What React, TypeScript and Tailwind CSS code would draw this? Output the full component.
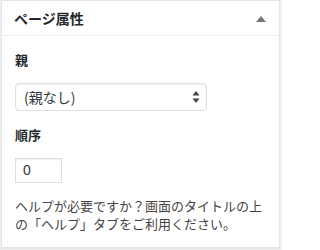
export default function App() {
  const font = { fontFamily: '"Noto Sans CJK JP", "Liberation Sans", sans-serif' };
  return (
    <div className="w-[282px] h-[250px] bg-[#f1f1f1] pl-px" style={font}>
      <div className="w-[279px] h-[248px] bg-white border border-[#e5e5e5] shadow-[0_1px_1px_rgba(0,0,0,0.04)]">
        {/* header */}
        <div className="h-[35px] flex items-center justify-between border-b border-[#eeeeee] pl-[12px] pr-[13px]">
          <h2 className="text-[14px] font-bold text-[#23282d] leading-none">ページ属性</h2>
          <svg width="10" height="6" viewBox="0 0 10 6" className="mt-px">
            <path d="M5 0 L10 6 L0 6 Z" fill="#72777c" />
          </svg>
        </div>

        {/* body */}
        <div className="pl-[13px] pr-[12px]">
          <p className="mt-[14px] text-[13px] font-bold leading-[20px] text-[#23282d]">親</p>
          <div className="mt-[13px] w-[192px] h-[28px] border border-[#dddddd] rounded-[4px] shadow-[inset_0_1px_2px_rgba(0,0,0,0.07)] flex items-center justify-between pl-[8px] pr-[6px]">
            <span className="text-[14px] text-[#32373c]">(親なし)</span>
            <svg width="8" height="12" viewBox="0 0 8 12">
              <path d="M4 0 L7.5 4.5 L0.5 4.5 Z" fill="#444" />
              <path d="M4 12 L7.5 7.5 L0.5 7.5 Z" fill="#444" />
            </svg>
          </div>

          <p className="mt-[14px] text-[13px] font-bold leading-[20px] text-[#23282d]">順序</p>
          <div className="mt-[13px] w-[47px] h-[25px] border border-[#dddddd] shadow-[inset_0_1px_2px_rgba(0,0,0,0.07)] flex items-center pl-[7px]">
            <span className="text-[14px] text-[#32373c]" style={{ fontFamily: '"Liberation Sans", sans-serif' }}>0</span>
          </div>

          <div className="mt-[14px] whitespace-nowrap text-[13px] leading-[18px] text-[#444444]">
            <p>ヘルプが必要ですか？画面のタイトルの上</p>
            <p>の「ヘルプ」タブをご利用ください。</p>
          </div>
        </div>
      </div>
    </div>
  );
}
